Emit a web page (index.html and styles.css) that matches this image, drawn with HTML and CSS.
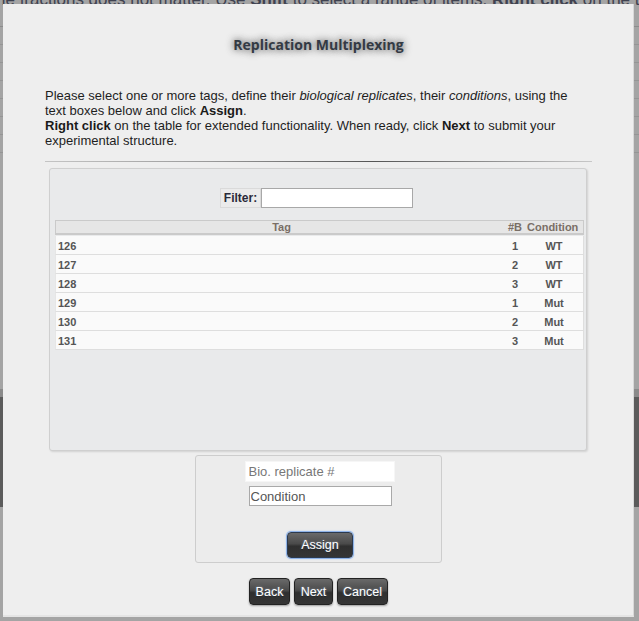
FILE: index.html
```html
<!DOCTYPE html>
<html>
<head>
<meta charset="utf-8">
<link rel="stylesheet" href="styles.css">
</head>
<body>
<div class="backdrop">
  <div class="bg-text">he fractions does not matter. Use <b>Shift</b> to select a range of items. <b>Right click</b> on the table for extended functionality.</div>
  <div class="bg-rows">
    <div class="bg-row"></div><div class="bg-row"></div><div class="bg-row"></div><div class="bg-row"></div><div class="bg-row"></div><div class="bg-row"></div><div class="bg-row"></div>
  </div>
  <div class="bg-dark"></div>
</div>

<div class="dialog">
  <h1 class="title">Replication Multiplexing</h1>
  <p class="intro">Please select one or more tags, define their <i>biological replicates</i>, their <i>conditions</i>, using the text boxes below and click <b>Assign</b>.<br><b>Right click</b> on the table for extended functionality. When ready, click <b>Next</b> to submit your experimental structure.</p>
  <div class="rule"></div>

  <div class="table-panel">
    <div class="filter-row">
      <label class="filter-label">Filter:</label>
      <input class="filter-input" type="text">
    </div>
    <div class="grid">
      <div class="grid-head">
        <div class="c-tag">Tag</div>
        <div class="c-b">#B</div>
        <div class="c-cond">Condition</div>
      </div>
      <div class="grid-row"><div class="c-tag">126</div><div class="c-b">1</div><div class="c-cond">WT</div></div>
      <div class="grid-row"><div class="c-tag">127</div><div class="c-b">2</div><div class="c-cond">WT</div></div>
      <div class="grid-row"><div class="c-tag">128</div><div class="c-b">3</div><div class="c-cond">WT</div></div>
      <div class="grid-row"><div class="c-tag">129</div><div class="c-b">1</div><div class="c-cond">Mut</div></div>
      <div class="grid-row"><div class="c-tag">130</div><div class="c-b">2</div><div class="c-cond">Mut</div></div>
      <div class="grid-row"><div class="c-tag">131</div><div class="c-b">3</div><div class="c-cond">Mut</div></div>
    </div>
  </div>

  <div class="assign-panel">
    <input class="in-bio" type="text" placeholder="Bio. replicate #">
    <input class="in-cond" type="text" placeholder="Condition">
    <button class="btn btn-assign">Assign</button>
  </div>

  <div class="actions">
    <button class="btn btn-back">Back</button>
    <button class="btn btn-next">Next</button>
    <button class="btn btn-cancel">Cancel</button>
  </div>
</div>
</body>
</html>
```
FILE: styles.css
```css
html, body {
  margin: 0;
  padding: 0;
}
body {
  width: 639px;
  height: 621px;
  overflow: hidden;
  background: #9d9d9d;
  font-family: "Liberation Sans", Arial, sans-serif;
  position: relative;
}
.backdrop {
  height: 621px;
  overflow: hidden;
  background: #a4a4a4;
}
.bg-text {
  font-size: 17px;
  line-height: 12px;
  margin-top: -6px;
  color: #3f4250;
  white-space: nowrap;
  margin-left: -4px;
}
.bg-rows {
  margin-top: 20px;
  border-top: 1px solid #8c8c8c;
}
.bg-row {
  height: 17px;
  border-bottom: 1px solid #959595;
}
.bg-dark {
  margin-top: 236px;
  height: 110px;
  background: #5b5b5b;
  border-top: 8px solid #8a8a8a;
}

.dialog {
  position: absolute;
  left: 3px;
  top: 4px;
  width: 631px;
  height: 613px;
  box-sizing: border-box;
  background: #eeeeee;
  border-right: 1px solid #d8d8d8;
  border-bottom: 2px solid #e4e4e4;
  padding: 31px 41px 0 42px;
  display: flex;
  flex-direction: column;
  align-items: stretch;
}
.title {
  margin: 0;
  text-align: center;
  font-family: "Open Sans", "Liberation Sans", sans-serif;
  font-weight: 700;
  font-size: 14px;
  line-height: 20px;
  color: #333a44;
  text-shadow: 0 0 6px #777, 0 0 10px #999;
}
.intro {
  margin: 33px 0 0 0;
  font-size: 13px;
  line-height: 15px;
  color: #1e1e1e;
}
.intro b {
  color: #1a1a1a;
}
.rule {
  margin-top: 13px;
  height: 1px;
  background: linear-gradient(to right, #c4c4c4 0%, #9a9a9a 30%, #555 60%, #9a9a9a 85%, #c8c8c8 100%);
}
.table-panel {
  margin: 6px 5px 0 4px;
  height: 283px;
  box-sizing: border-box;
  background: #e9eaeb;
  border: 1px solid #cfcfcf;
  border-radius: 3px;
  box-shadow: 1px 1px 2px rgba(0,0,0,0.12);
  padding: 19px 2px 0 5px;
}
.filter-row {
  display: flex;
  justify-content: center;
  align-items: stretch;
  height: 20px;
  padding-right: 6px;
}
.filter-label {
  font-size: 12px;
  font-weight: 700;
  color: #2a2a3a;
  background: #ebebeb;
  border: 1px solid #dadada;
  padding: 0 3px;
  line-height: 18px;
}
.filter-input {
  width: 152px;
  height: 20px;
  box-sizing: border-box;
  border: 1px solid #a8a8a8;
  background: #fff;
  margin: 0;
  padding: 0 3px;
}
.grid {
  margin-top: 12px;
  font-size: 11px;
  font-weight: 700;
  color: #555;
}
.grid-head {
  display: flex;
  height: 15px;
  box-sizing: border-box;
  background: #e6e6e6;
  border: 1px solid #cacaca;
  border-bottom-width: 2px;
  line-height: 13px;
  color: #7a6f66;
  margin-bottom: 1px;
}
.grid-row {
  display: flex;
  height: 19px;
  box-sizing: border-box;
  background: #fafafa;
  border-bottom: 1px solid #dedede;
  border-left: 1px solid #e6e6e6;
  border-right: 1px solid #dedede;
  line-height: 20px;
}
.c-tag {
  flex: 1;
  text-align: center;
}
.grid-row .c-tag {
  text-align: left;
  padding-left: 2px;
}
.c-b {
  width: 16px;
  text-align: center;
  padding-right: 2px;
}
.c-cond {
  width: 58px;
  text-align: center;
}
.grid-head .c-cond {
  text-align: left;
  padding-left: 2px;
  width: 54px;
  padding-right: 2px;
}

.assign-panel {
  align-self: center;
  margin-top: 4px;
  width: 247px;
  height: 108px;
  box-sizing: border-box;
  border: 1px solid #cdcdcd;
  border-radius: 3px;
  background: #ececec;
  display: flex;
  flex-direction: column;
  align-items: center;
  padding-top: 5px;
}
.in-bio, .in-cond {
  font-family: "Liberation Sans", Arial, sans-serif;
  font-size: 13px;
  box-sizing: border-box;
  margin: 0;
  padding: 0 3px;
}
.in-bio {
  width: 150px;
  height: 21px;
  border: 1px solid #f6f6f6;
  background: #fff;
  margin-left: 2px;
}
.in-bio::placeholder {
  color: #777;
}
.in-cond {
  margin-top: 4px;
  width: 143px;
  height: 20px;
  border: 1px solid #a9a9a9;
  background: #fff;
  margin-left: 3px;
  padding-left: 1px;
}
.in-cond::placeholder {
  color: #555;
}
.btn {
  font-family: "Liberation Sans", Arial, sans-serif;
  font-size: 12.5px;
  color: #fff;
  text-shadow: 0 0 2px #9ab, 0 1px 1px #000;
  background: linear-gradient(to bottom, #6a6a6a 0%, #4a4a4a 45%, #2f2f2f 55%, #353535 100%);
  border: 1px solid #222;
  border-radius: 4px;
  height: 27px;
  padding: 0;
  box-shadow: 0 1px 2px rgba(0,0,0,0.35);
  cursor: pointer;
}
.btn-assign {
  margin-top: 26px;
  margin-left: 3px;
  width: 66px;
  height: 26px;
  border-color: #2c3a4e;
  box-shadow: 0 0 0 1px #8fb3e8, 0 0 2px 1px #b8d0f0;
}
.actions {
  margin-top: 15px;
  display: flex;
  justify-content: center;
  gap: 4px;
}
.btn-back { width: 41px; }
.btn-next { width: 39px; }
.btn-cancel { width: 51px; }
```
